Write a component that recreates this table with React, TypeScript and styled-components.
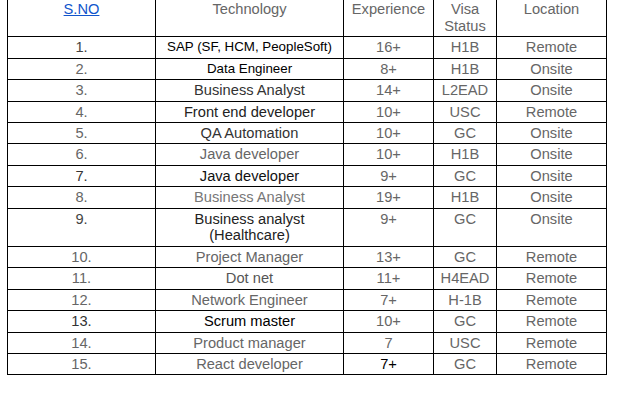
import React, { FC } from 'react';
import styled, { createGlobalStyle } from 'styled-components';

const GlobalStyle = createGlobalStyle`
  html, body {
    margin: 0;
    padding: 0;
    background: #fff;
  }
  body {
    font-family: 'Liberation Sans', Arial, sans-serif;
  }
`;

const Page = styled.div`
  padding: 0 0 0 7px;
  margin-top: -2px;
  width: 636px;
  height: 410px;
  overflow: hidden;
  box-sizing: border-box;
`;

const Sheet = styled.table`
  border-collapse: collapse;
  table-layout: fixed;
  width: 600px;
  font-size: 14.67px;
  line-height: 16.9px;
`;

const HeadCell = styled.th`
  border: 1px solid #000;
  padding: 2px 3px 1.5px;
  font-weight: normal;
  color: #666;
  text-align: center;
  vertical-align: top;
`;

const HeadLink = styled.a`
  color: #1155cc;
  text-decoration: underline;
`;

const Cell = styled.td<{ $tone?: string; $small?: boolean }>`
  border: 1px solid #000;
  padding: 2px 3px 1.5px;
  color: ${(p) => p.$tone || '#666'};
  font-size: ${(p) => (p.$small ? '13.33px' : '14.67px')};
  text-align: center;
  vertical-align: top;
`;

type Row = {
  no: string;
  noTone?: string;
  tech: React.ReactNode;
  techTone?: string;
  small?: boolean;
  exp: string;
  expTone?: string;
  visa: string;
  loc: string;
};

const rows: Row[] = [
  { no: '1.', noTone: '#444', tech: 'SAP (SF, HCM, PeopleSoft)', techTone: '#000', small: true, exp: '16+', visa: 'H1B', loc: 'Remote' },
  { no: '2.', tech: 'Data Engineer', techTone: '#000', small: true, exp: '8+', visa: 'H1B', loc: 'Onsite' },
  { no: '3.', tech: 'Business Analyst', techTone: '#333', exp: '14+', visa: 'L2EAD', loc: 'Onsite' },
  { no: '4.', tech: 'Front end developer', techTone: '#222', exp: '10+', visa: 'USC', loc: 'Remote' },
  { no: '5.', tech: 'QA Automation', techTone: '#333', exp: '10+', visa: 'GC', loc: 'Onsite' },
  { no: '6.', tech: 'Java developer', techTone: '#666', exp: '10+', visa: 'H1B', loc: 'Onsite' },
  { no: '7.', noTone: '#333', tech: 'Java developer', techTone: '#111', exp: '9+', visa: 'GC', loc: 'Onsite' },
  { no: '8.', tech: 'Business Analyst', techTone: '#777', exp: '19+', visa: 'H1B', loc: 'Onsite' },
  { no: '9.', noTone: '#444', tech: <>Business analyst<br />(Healthcare)</>, techTone: '#222', exp: '9+', visa: 'GC', loc: 'Onsite' },
  { no: '10.', tech: 'Project Manager', techTone: '#666', exp: '13+', visa: 'GC', loc: 'Remote' },
  { no: '11.', tech: 'Dot net', techTone: '#555', exp: '11+', visa: 'H4EAD', loc: 'Remote' },
  { no: '12.', tech: 'Network Engineer', techTone: '#666', exp: '7+', visa: 'H-1B', loc: 'Remote' },
  { no: '13.', noTone: '#333', tech: 'Scrum master', techTone: '#000', exp: '10+', visa: 'GC', loc: 'Remote' },
  { no: '14.', tech: 'Product manager', techTone: '#666', exp: '7', visa: 'USC', loc: 'Remote' },
  { no: '15.', tech: 'React developer', techTone: '#666', exp: '7+', expTone: '#000', visa: 'GC', loc: 'Remote' },
];

const App: FC = () => {
  return (
    <>
      <GlobalStyle />
      <Page>
        <Sheet>
          <colgroup>
            <col style={{ width: 148 }} />
            <col style={{ width: 188 }} />
            <col style={{ width: 90 }} />
            <col style={{ width: 63 }} />
            <col style={{ width: 110 }} />
          </colgroup>
          <thead>
            <tr>
              <HeadCell>
                <HeadLink href='#'>S.NO</HeadLink>
              </HeadCell>
              <HeadCell>Technology</HeadCell>
              <HeadCell>Experience</HeadCell>
              <HeadCell>
                Visa
                <br />
                Status
              </HeadCell>
              <HeadCell>Location</HeadCell>
            </tr>
          </thead>
          <tbody>
            {rows.map((r) => (
              <tr key={r.no}>
                <Cell $tone={r.noTone}>{r.no}</Cell>
                <Cell $tone={r.techTone} $small={r.small}>
                  {r.tech}
                </Cell>
                <Cell $tone={r.expTone}>{r.exp}</Cell>
                <Cell>{r.visa}</Cell>
                <Cell>{r.loc}</Cell>
              </tr>
            ))}
          </tbody>
        </Sheet>
      </Page>
    </>
  );
};

export default App;
